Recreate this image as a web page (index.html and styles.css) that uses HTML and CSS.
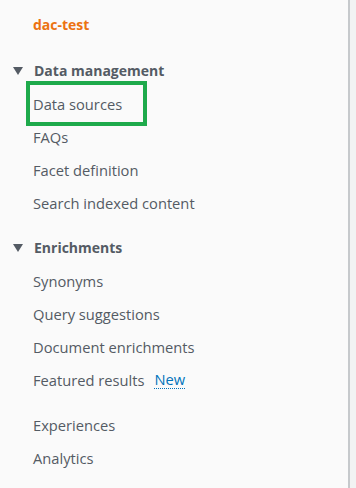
FILE: index.html
```html
<!DOCTYPE html>
<html lang="en">

<head>
    <meta charset="UTF-8">
    <meta name="viewport" content="width=device-width, initial-scale=1.0">
    <title>dac-test</title>
    <link rel="stylesheet" href="styles.css">
</head>

<body>
    <nav class="side-nav">
        <div class="nav-title">dac-test</div>

        <div class="nav-section">
            <div class="section-heading">
                <svg class="caret" width="10" height="8" viewBox="0 0 10 8"><path d="M0 0H10L5 8Z" fill="#545b64"/></svg>
                Data management
            </div>
            <ul class="nav-list">
                <li><a class="highlight">Data sources</a></li>
                <li><a>FAQs</a></li>
                <li><a>Facet definition</a></li>
                <li><a>Search indexed content</a></li>
            </ul>
        </div>

        <div class="nav-section">
            <div class="section-heading">
                <svg class="caret" width="10" height="8" viewBox="0 0 10 8"><path d="M0 0H10L5 8Z" fill="#545b64"/></svg>
                Enrichments
            </div>
            <ul class="nav-list">
                <li><a>Synonyms</a></li>
                <li><a>Query suggestions</a></li>
                <li><a>Document enrichments</a></li>
                <li><a>Featured results</a><span class="badge-new">New</span></li>
            </ul>
        </div>

        <div class="nav-section">
            <ul class="nav-list">
                <li><a>Experiences</a></li>
                <li><a>Analytics</a></li>
            </ul>
        </div>
    </nav>
</body>

</html>
```

FILE: styles.css
```css
* {
    margin: 0;
    padding: 0;
    box-sizing: border-box;
}

body {
    background: #f2f3f3;
    font-family: 'Open Sans', 'Liberation Sans', sans-serif;
    font-size: 14px;
    color: #545b64;
}

.side-nav {
    width: 350px;
    height: 488px;
    background: #fafafa;
    border-right: 2px solid #c6c9cc;
    padding-top: 8px;
}

.nav-title {
    line-height: 34px;
    padding-left: 33px;
    font-weight: bold;
    color: #ec7211;
    margin-bottom: 12px;
}

.nav-section {
    margin-bottom: 12px;
}

.section-heading {
    display: flex;
    align-items: center;
    height: 33px;
    padding-left: 13px;
    font-weight: bold;
    color: #545b64;
}

.caret {
    margin-right: 11px;
}

.nav-list {
    list-style: none;
    font-size: 14.7px;
}

.nav-list li {
    display: flex;
    align-items: center;
    height: 33px;
    padding-left: 33px;
}

.nav-list a {
    color: #545b64;
}

.highlight {
    position: relative;
}

.highlight::after {
    content: '';
    position: absolute;
    left: -7px;
    right: -25px;
    top: -13px;
    bottom: -12px;
    border: 4px solid #1eaa4b;
}

.badge-new {
    margin-left: 10px;
    color: #0073bb;
    border-bottom: 1px dotted #0073bb;
    line-height: 17px;
}
```
